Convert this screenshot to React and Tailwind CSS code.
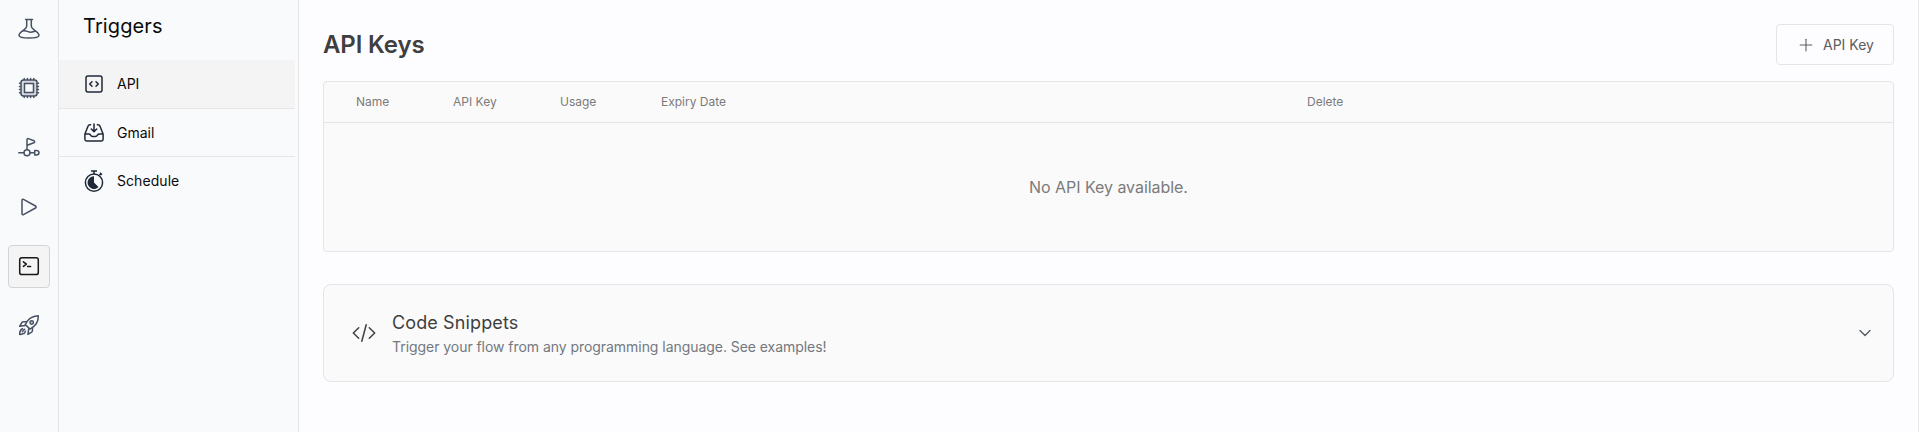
import React from "react";
import { ChevronDown, Plus } from "lucide-react";

const stroke = {
  viewBox: "0 0 22 22",
  fill: "none",
  stroke: "currentColor",
  strokeWidth: 1.5,
  strokeLinecap: "round",
  strokeLinejoin: "round",
  className: "size-[22px]",
};

const FlaskIcon = () => (
  <svg {...stroke}>
    <path d="M7.700 1.500h6.800M8.700 1.800v6.400c0 1.700-1.600 2.700-3.300 4C3.300 13.700 1 15.300 1 17.300c0 2 4 2.800 10 2.800s10-.8 10-2.800c0-2-2.300-3.600-4.400-5.100-1.700-1.300-3.300-2.300-3.300-4V1.800" />
    <path d="M4.800 12.900c3.200-1.200 5 1.500 8 1.300 1.800-.1 2.900-.9 4.400-.9" />
  </svg>
);

const ChipIcon = () => (
  <svg {...stroke}>
    <rect x="3" y="3" width="16" height="16" rx="2.500" fill="#d5d9df" />
    <rect x="6.500" y="6.500" width="9" height="9" fill="#f9fafc" />
    <path d="M6.200 2.500V1.500M9.400 2.500V1.500M12.600 2.500V1.500M15.800 2.500V1.500M6.200 20.500V19.500M9.400 20.500V19.500M12.600 20.500V19.500M15.800 20.500V19.500M2.500 6.200H1.500M2.500 9.400H1.500M2.500 12.600H1.500M2.500 15.800H1.500M20.500 6.200H19.500M20.500 9.400H19.500M20.500 12.600H19.500M20.500 15.800H19.500" />
  </svg>
);

const FlowIcon = () => (
  <svg {...stroke}>
    <path d="M9 12.500V2.600c0-.8.700-1.200 1.400-1l5.500 2.100c1 .4 1 1.700 0 2.100L9.200 8.200M.8 15.700h5M12.100 15.700h4" />
    <circle cx="9" cy="15.700" r="3" />
    <path d="M16.700 13.500v4.400h1.500c1.500 0 2.800-1 2.800-2.200s-1.300-2.200-2.800-2.200z" />
  </svg>
);

const PlayIcon = () => (
  <svg {...stroke}>
    <path d="M4 4.200v13.600c0 .8.800 1.200 1.500.8l12-6.600c.8-.5.800-1.500 0-2L5.500 3.400C4.800 3 4 3.400 4 4.200z" />
  </svg>
);

const TerminalIcon = () => (
  <svg {...stroke}>
    <rect x="1.700" y="1.800" width="18.600" height="16.800" rx="2.200" />
    <path d="M5.400 5.800l3 2.300-3 2.300M9.600 10.400h3" />
  </svg>
);

const RocketIcon = () => (
  <svg {...stroke} viewBox="0 1 22 22" overflow="visible">
    <path d="M7.200 10.500c2.300-5 6.500-8.300 13.100-8.700.3 6.300-3.200 10.600-8.300 13.300z" />
    <path d="M8.500 7.700l-3.300.1c-.6 0-1 .2-1.400.8l-2.200 3.700 5.600-.8M14.500 13.500l-.1 3.300c0 .6-.3 1-.8 1.400l-3.700 2.200.8-5.600" />
    <circle cx="13.700" cy="8.500" r="1.700" fill="#c3c9d2" />
    <path d="M4.600 14.700c-2 .7-3 2.600-2.900 5.700 1.300 0 2.300-.2 3.200-.6M7.400 17.300c-.4.900-.7 1.700-1.500 2.200M4.400 17.600l2.200-2.300" />
  </svg>
);

const ApiIcon = () => (
  <svg {...stroke} viewBox="0 0 20 20" className="size-5">
    <rect x="2" y="2" width="16" height="16" rx="2" />
    <path d="M8 7.700L5.700 10 8 12.300M12 7.700l2.300 2.300L12 12.300" />
  </svg>
);

const InboxIcon = () => (
  <svg {...stroke} viewBox="0 0 20 20" className="size-5">
    <path d="M6.600 1.700h-.7c-.9 0-1.500.5-1.800 1.300L.9 11v5.300c0 1 .7 1.600 1.600 1.600h15c.9 0 1.600-.7 1.600-1.600V11L15.900 3c-.3-.8-.9-1.300-1.800-1.300h-.7M1 10.900h3.900c.7 0 1.200.4 1.500.9.5 1 1.300 1.600 2.400 1.600h2.400c1.100 0 1.900-.6 2.400-1.600.3-.5.8-.9 1.500-.9H19M10 1v7.400M7.300 6L10 8.600 12.700 6" />
  </svg>
);

const StopwatchIcon = () => (
  <svg viewBox="0 0 20 22" fill="none" stroke="currentColor" strokeWidth="1.500" className="h-[22px] w-5">
    <circle cx="10" cy="12.600" r="8.600" />
    <path d="M10 6.300v6.300l4.500 4.500A6.350 6.350 0 1 1 10 6.300z" fill="currentColor" stroke="none" />
    <path d="M7 1h6M10 1v3" strokeWidth="1.500" />
    <path d="M15.500 5.200l1.700-1.700M16 2.800l2 2" />
  </svg>
);

const CodeIcon = () => (
  <svg {...stroke} viewBox="0 0 24 24" className="size-6">
    <path d="M6.700 6.800L1.300 12l5.400 5.200M17.300 6.800l5.400 5.200-5.400 5.200M14.200 3.700L9.800 20.300" />
  </svg>
);

const navItems = [FlaskIcon, ChipIcon, FlowIcon, PlayIcon, TerminalIcon, RocketIcon];

const triggers = [
  { label: "API", Icon: ApiIcon },
  { label: "Gmail", Icon: InboxIcon },
  { label: "Schedule", Icon: StopwatchIcon },
];

export default function App() {
  return (
    <div className="flex h-[432px] w-full overflow-hidden bg-[#fdfdff] font-['Inter',sans-serif] text-[#3f3f3f]">
      <nav className="flex w-[59px] shrink-0 flex-col items-center gap-[16.500px] border-r border-[#e5e5e5] bg-[#f9fafc] pt-[7px] text-[#475162]">
        {navItems.map((Icon, i) => (
          <button
            key={i}
            className={
              i === 4
                ? "flex h-[43px] w-[42px] shrink-0 items-center justify-center rounded border border-[#d4d4d4] bg-[#f4f4f5] text-[#18181b]"
                : "flex h-[43px] w-[42px] shrink-0 items-center justify-center"
            }
          >
            <Icon />
          </button>
        ))}
      </nav>

      <aside className="w-60 shrink-0 border-r border-[#e5e5e5] bg-[#f9fafc] pr-[3px]">
        <h2 className="flex h-[60px] items-start pl-6 pt-3 text-xl leading-7 tracking-[0.1px] text-[#0a0a0a]">Triggers</h2>
        <ul>
          {triggers.map(({ label, Icon }, i) => (
            <li
              key={label}
              className={
                i === 0
                  ? "flex h-[49px] items-center gap-[13px] border-b border-[#e5e5e5] bg-[#f4f4f4] pl-[25px] text-sm text-[#0a0a0a]"
                  : i === 1
                    ? "flex h-12 items-center gap-[13px] border-b border-[#e5e5e5] pl-[25px] text-sm text-[#0a0a0a]"
                    : "flex h-12 items-center gap-[13px] pl-[25px] text-sm tracking-[0.06px] text-[#0a0a0a]"
              }
            >
              <span className="text-[#1f2937]"><Icon /></span>
              {label}
            </li>
          ))}
        </ul>
      </aside>

      <main className="min-w-0 flex-1 border-r border-[#e8e8ea] px-6 pt-6">
        <header className="flex h-[41px] items-center justify-between">
          <h1 className="text-2xl font-semibold tracking-[-0.15px]">API Keys</h1>
          <button className="flex h-[41px] w-[118px] items-center gap-[7px] rounded border border-[#e5e5e5] pl-[19px] text-sm text-[#5c5c5c]">
            <Plus size={20} strokeWidth={1.300} />
            API Key
          </button>
        </header>

        <section className="mt-4 h-[171px] rounded border border-[#e5e5e5] bg-[#fafafa]">
          <div className="flex h-[41px] items-center border-b border-[#e5e5e5] pl-8 text-xs text-[#7a7a7a]">
            <span className="w-[97px]">Name</span>
            <span className="w-[107px]">API Key</span>
            <span className="w-[101px]">Usage</span>
            <span className="w-[646px]">Expiry Date</span>
            <span>Delete</span>
          </div>
          <p className="flex h-[128px] items-center justify-center text-base tracking-[-0.05px] text-[#7a7a7a]">No API Key available.</p>
        </section>

        <section className="mt-8 flex h-[98px] items-center rounded-lg border border-[#e5e5e5] bg-[#fafafa] pl-7 pr-[18px]">
          <CodeIcon />
          <div className="ml-4 flex-1 pt-1">
            <h3 className="text-lg leading-6 tracking-[0.12px]">Code Snippets</h3>
            <p className="text-sm leading-6 tracking-[-0.05px] text-[#737880]">Trigger your flow from any programming language. See examples!</p>
          </div>
          <ChevronDown size={20} strokeWidth={1.500} className="text-[#525866]" />
        </section>
      </main>
    </div>
  );
}
